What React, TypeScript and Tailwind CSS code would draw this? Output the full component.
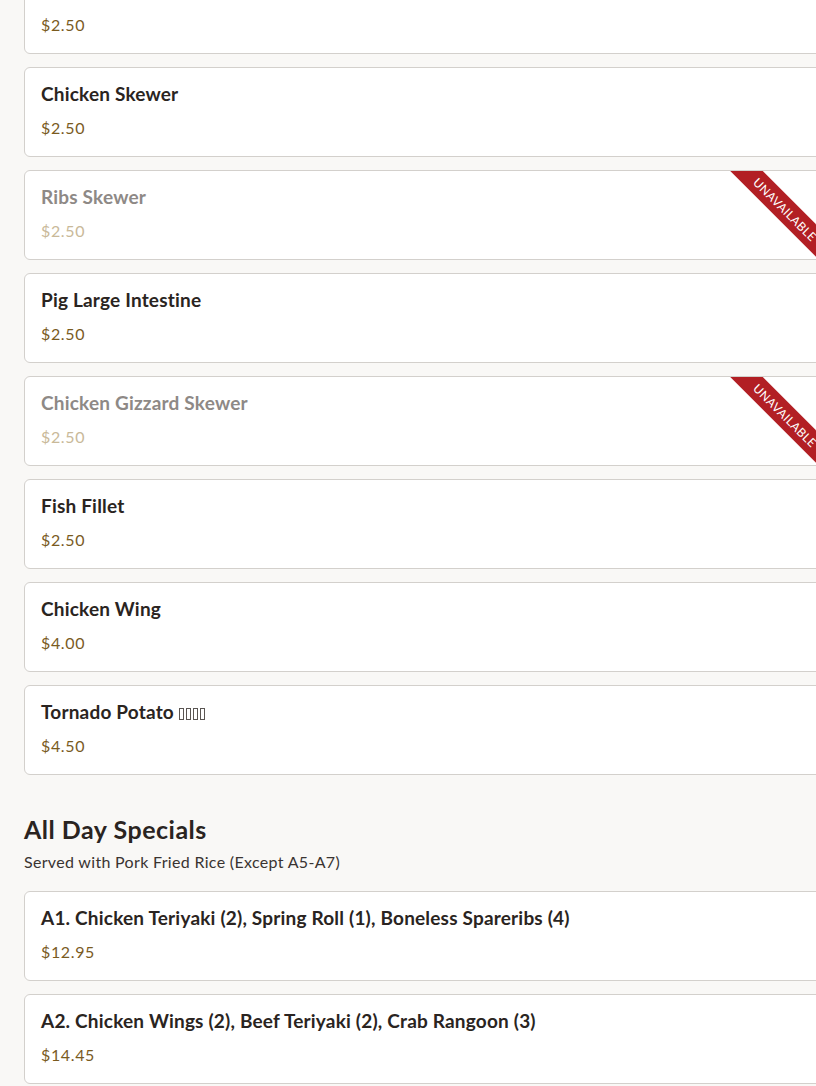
import React from "react";

type Item = { name: string; price: string; unavailable?: boolean; tofu?: number };

const skewers: Item[] = [
  { name: "Lamb Skewer", price: "$2.50" },
  { name: "Chicken Skewer", price: "$2.50" },
  { name: "Ribs Skewer", price: "$2.50", unavailable: true },
  { name: "Pig Large Intestine", price: "$2.50" },
  { name: "Chicken Gizzard Skewer", price: "$2.50", unavailable: true },
  { name: "Fish Fillet", price: "$2.50" },
  { name: "Chicken Wing", price: "$4.00" },
  { name: "Tornado Potato", price: "$4.50", tofu: 4 },
];

const specials: Item[] = [
  { name: "A1. Chicken Teriyaki (2), Spring Roll (1), Boneless Spareribs (4)", price: "$12.95" },
  { name: "A2. Chicken Wings (2), Beef Teriyaki (2), Crab Rangoon (3)", price: "$14.45" },
];

function MenuCard({ item }: { item: Item }) {
  return (
    <div className="relative overflow-hidden rounded-md border border-[#d3d0cc] bg-white px-4 pt-[17px] pb-[17px]">
      <h3
        className={`text-[19px] leading-[18px] font-bold tracking-[0.01em] ${item.unavailable ? "text-[#8e8986]" : "text-[#2a2421]"}`}
      >
        {item.name}
        {item.tofu ? (
          <span className="ml-[5px] inline-flex gap-[2px] align-[-1px]">
            {Array.from({ length: item.tofu }).map((_, i) => (
              <span key={i} className="inline-block h-[12px] w-[5px] border border-[#5a5552]" />
            ))}
          </span>
        ) : null}
      </h3>
      <p
        className={`mt-[14px] text-[16px] leading-[22px] tracking-[0.04em] ${item.unavailable ? "text-[#c9b999]" : "text-[#7a5b1f]"}`}
      >
        {item.price}
      </p>
      {item.unavailable && (
        <div className="absolute right-[-32px] top-[27px] flex h-[23px] w-[140px] rotate-45 items-center justify-center bg-[#b21f24] text-[12px] uppercase tracking-[0.03em] text-white">
          Unavailable
        </div>
      )}
    </div>
  );
}

export default function App() {
  return (
    <div className="min-h-screen w-full overflow-hidden bg-[#f9f8f6]" style={{ fontFamily: "Lato, 'Open Sans', sans-serif" }}>
      <div className="-mt-9 w-[848px] px-6">
        <div className="flex flex-col gap-[13px]">
          {skewers.map((s) => (
            <MenuCard key={s.name} item={s} />
          ))}
        </div>

        <section className="mt-[38px]">
          <h2 className="text-[25px] leading-8 font-bold tracking-[0.02em] text-[#2a2421]">All Day Specials</h2>
          <p className="mt-[5px] text-[16px] leading-6 tracking-[0.02em] text-[#3a3431]">
            Served with Pork Fried Rice (Except A5-A7)
          </p>
          <div className="mt-[17px] flex flex-col gap-[13px] pb-6">
            {specials.map((s) => (
              <MenuCard key={s.name} item={s} />
            ))}
          </div>
        </section>
      </div>
    </div>
  );
}
